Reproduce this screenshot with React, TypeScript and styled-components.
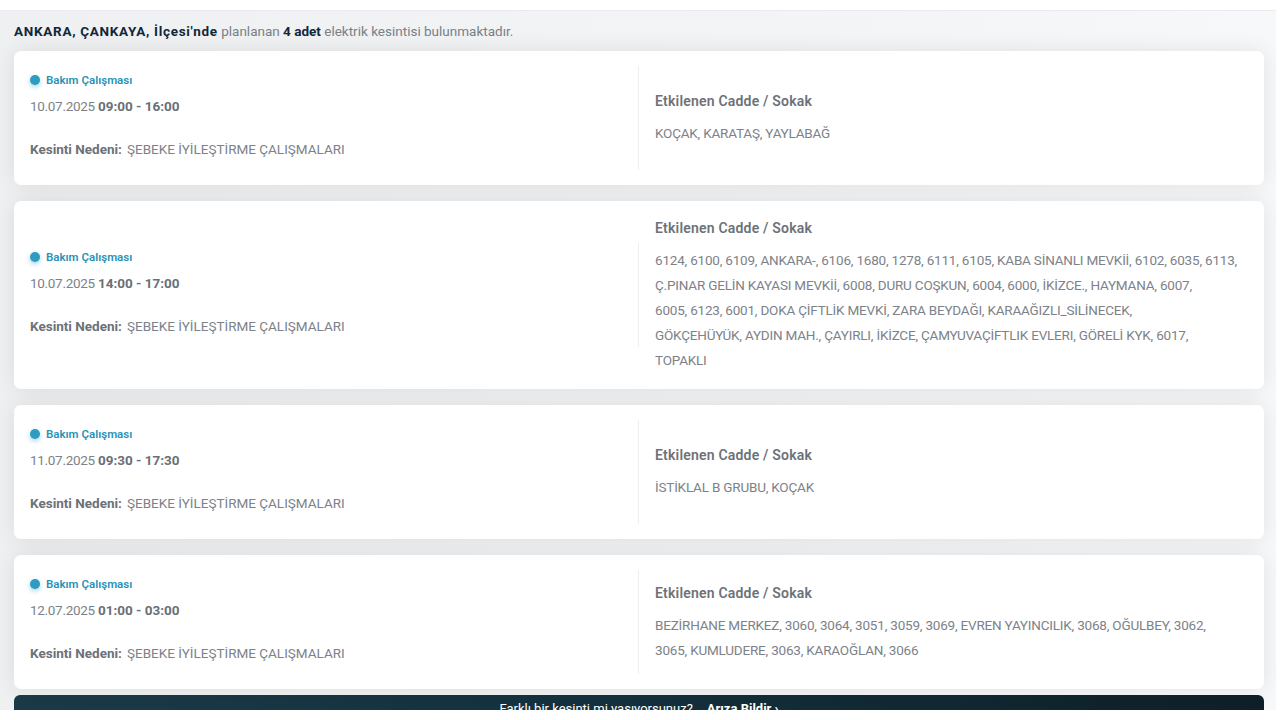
import styled, { createGlobalStyle } from 'styled-components';

const GlobalStyle = createGlobalStyle`
  * { box-sizing: border-box; }
  body {
    margin: 0;
    background: #ffffff;
    font-family: Roboto, 'Liberation Sans', sans-serif;
  }
`;

type Outage = {
  date: string;
  time: string;
  reason: string;
  streets: string;
};

// satır sonları ekrandaki kırılımla aynı tutuldu
const outages: Outage[] = [
  {
    date: '10.07.2025',
    time: '09:00 - 16:00',
    reason: 'ŞEBEKE İYİLEŞTİRME ÇALIŞMALARI',
    streets: 'KOÇAK, KARATAŞ, YAYLABAĞ',
  },
  {
    date: '10.07.2025',
    time: '14:00 - 17:00',
    reason: 'ŞEBEKE İYİLEŞTİRME ÇALIŞMALARI',
    streets:
      '6124, 6100, 6109, ANKARA-, 6106, 1680, 1278, 6111, 6105, KABA SİNANLI MEVKİİ, 6102, 6035, 6113,\nÇ.PINAR GELİN KAYASI MEVKİİ, 6008, DURU COŞKUN, 6004, 6000, İKİZCE., HAYMANA, 6007,\n6005, 6123, 6001, DOKA ÇİFTLİK MEVKİ, ZARA BEYDAĞI, KARAAĞIZLI_SİLİNECEK,\nGÖKÇEHÜYÜK, AYDIN MAH., ÇAYIRLI, İKİZCE, ÇAMYUVAÇİFTLIK EVLERI, GÖRELİ KYK, 6017,\nTOPAKLI',
  },
  {
    date: '11.07.2025',
    time: '09:30 - 17:30',
    reason: 'ŞEBEKE İYİLEŞTİRME ÇALIŞMALARI',
    streets: 'İSTİKLAL B GRUBU, KOÇAK',
  },
  {
    date: '12.07.2025',
    time: '01:00 - 03:00',
    reason: 'ŞEBEKE İYİLEŞTİRME ÇALIŞMALARI',
    streets:
      'BEZİRHANE MERKEZ, 3060, 3064, 3051, 3059, 3069, EVREN YAYINCILIK, 3068, OĞULBEY, 3062,\n3065, KUMLUDERE, 3063, KARAOĞLAN, 3066',
  },
];

const Page = styled.div`
  margin-top: 10px;
  width: 1276px;
  height: 700px;
  overflow: hidden;
  padding: 0 12px 0 14px;
  background: linear-gradient(90deg, #eef0f2 0%, #f3f4f6 60%, #f7f8f9 100%);
  border-top: 1px solid #e9ebee;
`;

const Summary = styled.p`
  margin: 0;
  padding: 11px 0 11px;
  font-size: 13.5px;
  line-height: 18px;
  color: #7a8088;

  b {
    color: #10283a;
    font-weight: 700;
  }
`;

const Region = styled.b`
  letter-spacing: 0.7px;
`;

const List = styled.div`
  display: flex;
  flex-direction: column;
  gap: 16px;
  width: 1250px;
`;

const Card = styled.div`
  display: flex;
  align-items: center;
  background: #ffffff;
  border-radius: 7px;
  padding: 15px 16px;
  box-shadow: 0 0 22px rgba(0, 0, 0, 0.09);
`;

const Info = styled.div`
  flex: 0 0 609px;
  height: 104px;
  padding-top: 6px;
  border-right: 1px solid #eeeeee;
`;

const Badge = styled.div`
  display: flex;
  align-items: center;
  gap: 6px;
  height: 16px;
  font-size: 11.5px;
  font-weight: 600;
  color: #2b93b8;
`;

const Dot = styled.span`
  width: 10px;
  height: 10px;
  border-radius: 50%;
  background: #2d9cc0;
  box-shadow: 0 2px 5px rgba(45, 156, 192, 0.45);
`;

const DateLine = styled.div`
  margin-top: 8px;
  font-size: 13.5px;
  line-height: 20px;
  color: #7d8289;
  letter-spacing: -0.3px;

  b {
    color: #6a6f76;
    font-weight: 700;
    letter-spacing: 0;
  }
`;

const Reason = styled.div`
  margin-top: 23px;
  font-size: 13.5px;
  line-height: 20px;
  color: #7d8289;

  b {
    color: #6c7178;
    font-weight: 700;
    margin-right: 5px;
  }
`;

const Streets = styled.div`
  flex: 1;
  min-width: 0;
  padding: 2px 0 1px 16px;
`;

const StreetsTitle = styled.div`
  font-size: 14px;
  line-height: 20px;
  font-weight: 600;
  color: #6d7279;
  margin-bottom: 10px;
  letter-spacing: 0.2px;
`;

const StreetsText = styled.div`
  font-size: 13.5px;
  line-height: 25px;
  color: #7d8289;
  letter-spacing: -0.2px;
  white-space: pre-line;
`;

const ReportBar = styled.div`
  margin-top: 6px;
  width: 1250px;
  height: 30px;
  border-radius: 6px 6px 0 0;
  background: linear-gradient(90deg, #1b3a48 0%, #14303c 50%, #0f1f27 100%);
  display: flex;
  justify-content: center;
  padding-top: 6px;
  font-size: 13px;
  line-height: 16px;
  color: #ffffff;

  b {
    margin-left: 14px;
    font-weight: 700;
  }
`;

export default function App() {
  return (
    <>
      <GlobalStyle />
      <Page>
        <Summary>
          <Region>ANKARA, ÇANKAYA, İlçesi'nde</Region> planlanan <b>4 adet</b> elektrik kesintisi bulunmaktadır.
        </Summary>
        <List>
          {outages.map((o, i) => (
            <Card key={i}>
              <Info>
                <Badge>
                  <Dot />
                  Bakım Çalışması
                </Badge>
                <DateLine>
                  {o.date} <b>{o.time}</b>
                </DateLine>
                <Reason>
                  <b>Kesinti Nedeni:</b>
                  {o.reason}
                </Reason>
              </Info>
              <Streets>
                <StreetsTitle>Etkilenen Cadde / Sokak</StreetsTitle>
                <StreetsText>{o.streets}</StreetsText>
              </Streets>
            </Card>
          ))}
        </List>
        <ReportBar>
          <span>Farklı bir kesinti mi yaşıyorsunuz?</span>
          <b>Arıza Bildir ›</b>
        </ReportBar>
      </Page>
    </>
  );
}
